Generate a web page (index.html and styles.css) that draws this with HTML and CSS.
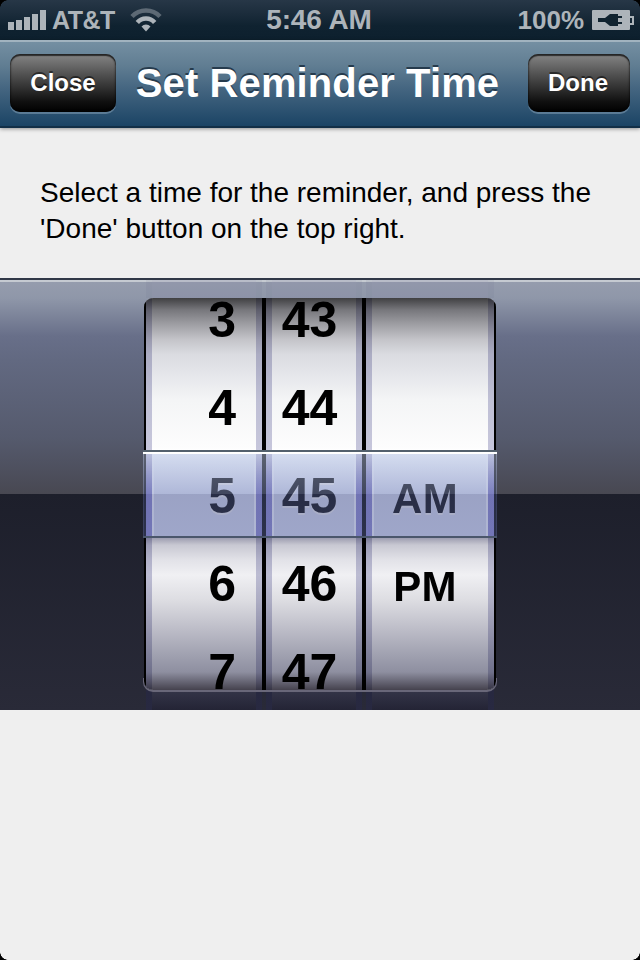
FILE: index.html
```html
<!DOCTYPE html>
<html lang="en">
<head>
<meta charset="utf-8">
<title>Set Reminder Time</title>
<link rel="stylesheet" href="styles.css">
</head>
<body>
<div class="screen">
  <header class="status">
    <div class="carrier">
      <svg width="38" height="20" viewBox="0 0 38 20" fill="currentColor"><path d="M0 12h6v8H0zM8 10h6v10H8zM16 7h6v13h-6zM24 4h6v16h-6zM32 0h6v20h-6z"/></svg>
      <span class="network">AT&amp;T</span>
      <svg class="wifi" width="32" height="24" viewBox="0 0 32 24" fill="none" stroke="currentColor"><path d="M2 8.500a19.300 19.300 0 0 1 28 0" stroke-width="4.500" opacity=".45"/><path d="M7.300 14.500a11.500 11.500 0 0 1 17.400 0" stroke-width="4.500"/><path d="M16 23.500l-4.500-5a6 6 0 0 1 9 0z" fill="currentColor" stroke="none"/></svg>
    </div>
    <div class="clock">5:46 AM</div>
    <div class="power">
      <span class="percent">100%</span>
      <svg width="42" height="20" viewBox="0 0 42 20"><rect width="38" height="20" rx="1" fill="currentColor"/><path d="M38 7h3v7h-3" fill="none" stroke="currentColor" stroke-width="2"/><path d="M6 8h7l5-4h8v2h4v2h-4v4h4v2h-4v2h-8l-5-4H6z" fill="#102330"/></svg>
    </div>
  </header>
  <nav class="navbar">
    <button class="btn close">Close</button>
    <h1>Set Reminder Time</h1>
    <button class="btn done">Done</button>
  </nav>
  <main class="message">Select a time for the reminder, and press the<br>'Done' button on the top right.</main>
  <section class="picker">
    <div class="wheels">
      <div class="wheel hours"><div>3</div><div>4</div><div>5</div><div>6</div><div>7</div></div>
      <div class="wheel minutes"><div>43</div><div>44</div><div>45</div><div>46</div><div>47</div></div>
      <div class="wheel period"><div></div><div></div><div>AM</div><div>PM</div><div></div></div>
    </div>
    <div class="ghosts top"><i></i><i></i><i></i></div>
    <div class="ghosts bottom"><i></i><i></i><i></i></div>
    <div class="selection"></div>
  </section>
  <i class="corner tl"></i><i class="corner tr"></i><i class="corner bl"></i><i class="corner br"></i>
</div>
</body>
</html>
```

FILE: styles.css
```css
*, *::before, *::after { box-sizing: border-box; }
body { margin: 0; background: #efefef; font-family: "Liberation Sans", Arial, sans-serif; }
.screen { position: relative; width: 640px; height: 960px; overflow: hidden; background: #efefef; }

.status {
  display: grid; grid-template-columns: 1fr auto 1fr; align-items: center;
  height: 40px; padding: 0 6px 0 8px;
  background: linear-gradient(#273747 0, #1b2c3b 14px, #0f2230 26px, #0d202e);
  color: #adb4ba; font-weight: bold; line-height: 40px;
}
.carrier, .power { display: flex; align-items: center; }
.power { justify-content: flex-end; }
.network { margin-left: 6px; font-size: 25px; letter-spacing: -.5px; }
.wifi { margin-left: 15px; }
.clock { padding-right: 4px; font-size: 28px; letter-spacing: -.1px; }
.percent { margin-right: 8px; font-size: 26px; }

.navbar {
  position: relative; z-index: 1;
  display: flex; align-items: center; justify-content: space-between;
  height: 88px; padding: 0 10px 2px;
  border-top: 2px solid #a1b3bf; border-bottom: 2px solid #122f47;
  background: linear-gradient(#748fa2, #607d92 24px, #456681 46px, #1b4465);
  box-shadow: 0 1px 4px rgba(0,0,0,.4);
}
h1 { margin: 0 9px 0 0; color: #fff; font-size: 40px; line-height: 48px; letter-spacing: .1px; text-shadow: 0 -2px 0 #263b4d; }
.btn {
  height: 58px; padding: 0; border: 0; border-radius: 10px;
  background: linear-gradient(#858585, #505050 36%, #101010 82%, #000);
  box-shadow: 0 2px 0 rgba(150,175,195,.45), inset 0 2px 1px rgba(0,0,0,.6), inset 0 0 2px 1px rgba(0,0,0,.4);
  color: #fff; font: bold 24px "Liberation Sans", Arial, sans-serif; text-shadow: 0 -2px 0 rgba(0,0,0,.5);
}
.close { width: 106px; }
.done { width: 102px; padding-right: 2px; }

.message { height: 150px; padding: 47px 40px 0; color: #000; font-size: 28px; line-height: 36px; white-space: nowrap; }

.picker {
  position: relative; display: flex; justify-content: center;
  height: 432px; padding-top: 20px;
  background: linear-gradient(#303848 0 2px, #c5cad1 2px 4px, #959cad 4px, #8f97a9 20px, #686f89 58px, #626981 82px, #555a6d 160px, #484852 216px, #1d1f2b 216px, #292a38 432px);
}
.wheels {
  position: relative; display: flex; gap: 4px; isolation: isolate;
  width: 352px; height: 392px; padding: 0 2px; overflow: hidden;
  background: #000; border-radius: 9px;
}
.wheels::after {
  content: ""; position: absolute; inset: 0; mix-blend-mode: multiply;
  background: linear-gradient(#404042 0, #77777c 12px, #98989d 24px, #c5c5ca 42px, #dadbe0 56px, #e7e8ec 80px, #f4f5f6 102px, #fdfdfd 150px, #fff 152px 238px, #9d9db0 240px, #c8c8d2 247px, #e2e2e8 262px, #f0f0f3 277px, #dddde2 302px, #bcbcc7 332px, #a0a1b0 357px, #8e8fa0 374px, #45424e 392px);
}
.wheel {
  height: 392px;
  border: solid #c8c8dd; border-width: 0 6px;
  background: linear-gradient(#fff 154px, #f2f6ff 154px, #e6ebff 196px 238px, #fff 238px); color: #000;
  font-size: 50px; font-weight: bold; text-align: center; text-shadow: 0 2px 0 #fff;
}
.wheel div { height: 88px; line-height: 88px; }
.wheel div:first-child { margin-top: -22px; }
.hours { width: 116px; padding-right: 20px; text-align: right; }
.minutes { width: 96px; padding-right: 9px; }
.period { width: 128px; padding-right: 10px; font-size: 42px; letter-spacing: .3px; }
.period div:first-child { margin-top: -19px; }

.ghosts { position: absolute; left: 146px; display: flex; gap: 4px; height: 18px; }
.ghosts i { width: 116px; height: 100%; border: solid rgba(95,95,130,.08); border-width: 0 6px; background: rgba(135,135,165,.2); background-clip: padding-box; }
.ghosts i:nth-child(2) { width: 96px; }
.ghosts i:nth-child(3) { width: 128px; }
.ghosts.top { top: 2px; }
.ghosts.bottom { bottom: 0; height: 20px; }
.ghosts.bottom i { border-color: rgba(40,40,85,.3); background: linear-gradient(rgba(65,65,90,.5), rgba(30,30,50,.5)) padding-box; }
.ghosts.bottom::before { content: ""; position: absolute; top: -12px; left: -3px; width: 354px; height: 14px; border: solid #696779; border-width: 0 1px 2px; border-radius: 0 0 10px 10px; }

.selection {
  position: absolute; top: 172px; left: 143px; width: 354px; height: 88px;
  border-top: 2px solid #53606d; border-bottom: 2px solid #4a566b;
  background: linear-gradient(#fff 0 2px, rgba(184,196,225,.5) 2px, rgba(124,136,180,.52) 42px, rgba(80,90,138,.5) 42px, rgba(88,98,148,.5));
}
.selection::after {
  content: ""; position: absolute; inset: 2px 0 0;
  background: linear-gradient(90deg, transparent 3px, rgba(75,75,180,.42) 3px 9px, rgba(255,255,255,.18) 9px 11px, transparent 11px 111px, rgba(255,255,255,.18) 111px 113px, rgba(75,75,180,.42) 113px 119px, transparent 119px 123px, rgba(75,75,180,.42) 123px 129px, rgba(255,255,255,.18) 129px 131px, transparent 131px 211px, rgba(255,255,255,.18) 211px 213px, rgba(75,75,180,.42) 213px 219px, transparent 219px 223px, rgba(75,75,180,.42) 223px 229px, rgba(255,255,255,.18) 229px 231px, transparent 231px 343px, rgba(255,255,255,.18) 343px 345px, rgba(75,75,180,.42) 345px 351px, transparent 351px);
  -webkit-mask-image: linear-gradient(rgba(0,0,0,.1), #000 40px);
  mask-image: linear-gradient(rgba(0,0,0,.1), #000 40px);
}

.corner { position: absolute; width: 8px; height: 8px; }
.tl { top: 0; left: 0; background: radial-gradient(circle at 100% 100%, transparent 7.500px, #000 8px); }
.tr { top: 0; right: 0; background: radial-gradient(circle at 0 100%, transparent 7.500px, #000 8px); }
.bl { bottom: 0; left: 0; background: radial-gradient(circle at 100% 0, transparent 7.500px, #000 8px); }
.br { bottom: 0; right: 0; background: radial-gradient(circle at 0 0, transparent 7.500px, #000 8px); }
```
